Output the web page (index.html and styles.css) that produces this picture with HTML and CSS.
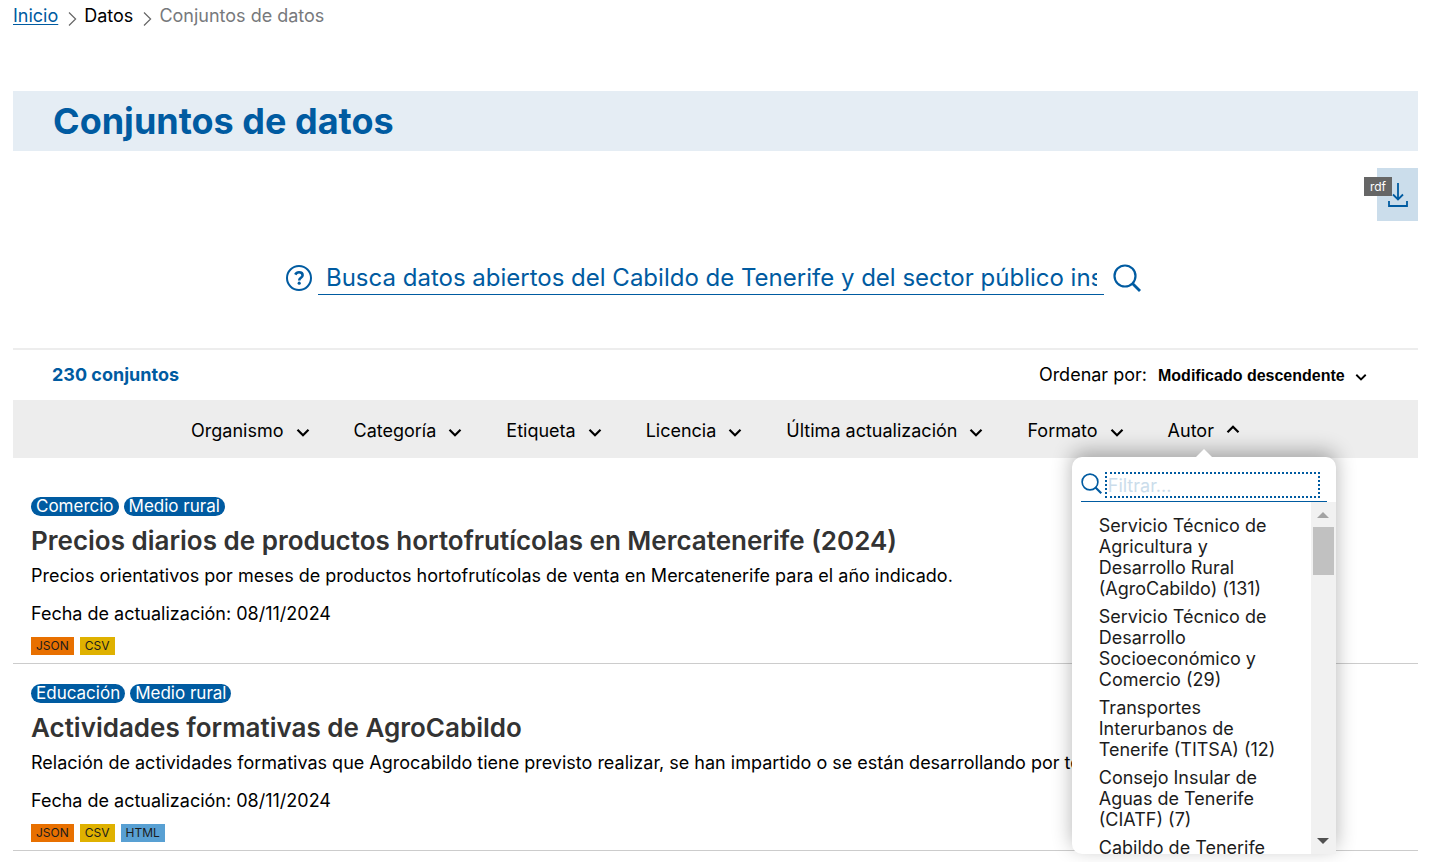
FILE: index.html
```html
<!DOCTYPE html>
<html lang="es">
<head>
<meta charset="utf-8">
<meta name="viewport" content="width=device-width, initial-scale=1">
<title>Conjuntos de datos</title>
<link rel="stylesheet" href="styles.css">
</head>
<body>
<svg class="sprite" aria-hidden="true">
  <symbol id="down" viewBox="0 0 14 10"><path d="M1.5 1.8 7 7.3l5.500-5.500" fill="none" stroke="currentColor" stroke-width="2.200"/></symbol>
  <symbol id="up" viewBox="0 0 14 10"><path d="M1.500 8.200 7 2.700l5.500 5.500" fill="none" stroke="currentColor" stroke-width="2.200"/></symbol>
  <symbol id="next" viewBox="0 0 9 16"><path d="M1 1.500 7.600 8 1 14.500" fill="none" stroke="currentColor" stroke-width="1.200"/></symbol>
  <symbol id="search" viewBox="0 0 28 28"><circle cx="12" cy="12" r="10.500" fill="none" stroke="currentColor" stroke-width="2.200"/><path d="m19 19 8 8" stroke="currentColor" stroke-width="2.800"/></symbol>
</svg>
<nav aria-label="Ruta">
  <ol class="breadcrumb">
    <li><a href="#">Inicio</a></li>
    <li><svg class="next"><use href="#next"/></svg>Datos</li>
    <li class="current"><svg class="next"><use href="#next"/></svg>Conjuntos de datos</li>
  </ol>
</nav>
<main>
  <h1 class="page-title">Conjuntos de datos</h1>
  <div class="export">
    <a class="download" href="#" aria-label="Descargar rdf">
      <span class="download-tag">rdf</span>
      <svg class="download-icon" viewBox="0 0 22 26" fill="none" stroke="currentColor" stroke-width="1.800"><path d="M11 1v16M6 12.500l5 5 5-5M2 19v5h18v-5"/></svg>
    </a>
  </div>
  <form class="search" role="search">
    <button class="icon-button" type="button" aria-label="Ayuda">
      <svg class="help-icon" viewBox="0 0 28 28"><circle cx="14" cy="14" r="12" fill="none" stroke="currentColor" stroke-width="2"/><path d="M10.300 10.600c.8-1.700 2-2.300 3.700-2.300 2.200 0 3.600 1.100 3.600 2.900 0 2.600-3.400 2.400-3.400 5.200" fill="none" stroke="currentColor" stroke-width="2.600"/><circle cx="14.200" cy="19.200" r="1.600" fill="currentColor"/></svg>
    </button>
    <input class="search-input" type="text" aria-label="Buscar datos" placeholder="Busca datos abiertos del Cabildo de Tenerife y del sector público insular">
    <button class="icon-button" type="submit" aria-label="Buscar"><svg class="search-icon"><use href="#search"/></svg></button>
  </form>
  <div class="summary">
    <h2 class="count">230 conjuntos</h2>
    <div class="order">
      <label for="order">Ordenar por:</label>
      <span class="select-wrap">
        <select id="order" class="select"><option>Modificado descendente</option></select>
        <svg class="chevron small"><use href="#down"/></svg>
      </span>
    </div>
  </div>
  <ul class="filters">
    <li><button class="filter" type="button">Organismo<svg class="chevron"><use href="#down"/></svg></button></li>
    <li><button class="filter" type="button">Categoría<svg class="chevron"><use href="#down"/></svg></button></li>
    <li><button class="filter" type="button">Etiqueta<svg class="chevron"><use href="#down"/></svg></button></li>
    <li><button class="filter" type="button">Licencia<svg class="chevron"><use href="#down"/></svg></button></li>
    <li><button class="filter" type="button">Última actualización<svg class="chevron"><use href="#down"/></svg></button></li>
    <li><button class="filter" type="button">Formato<svg class="chevron"><use href="#down"/></svg></button></li>
    <li class="open">
      <button class="filter expanded" type="button" aria-expanded="true">Autor<svg class="chevron"><use href="#up"/></svg></button>
      <div class="panel">
        <div class="panel-search">
          <svg class="panel-icon"><use href="#search"/></svg>
          <input class="panel-input" type="text" aria-label="Filtrar autores" placeholder="Filtrar...">
        </div>
        <div class="panel-body">
          <ul class="options">
            <li><a href="#">Servicio Técnico de Agricultura y Desarrollo Rural (AgroCabildo) (131)</a></li>
            <li><a href="#">Servicio Técnico de Desarrollo Socioeconómico y Comercio (29)</a></li>
            <li><a href="#">Transportes Interurbanos de Tenerife (TITSA) (12)</a></li>
            <li><a href="#">Consejo Insular de Aguas de Tenerife (CIATF) (7)</a></li>
            <li><a href="#">Cabildo de Tenerife</a></li>
          </ul>
          <div class="scrollbar" aria-hidden="true">
            <span class="arrow arrow-up"></span>
            <span class="thumb"></span>
            <span class="arrow arrow-down"></span>
          </div>
        </div>
      </div>
    </li>
  </ul>
  <article class="dataset">
    <ul class="topics"><li>Comercio</li><li>Medio rural</li></ul>
    <h3 class="dataset-title">Precios diarios de productos hortofrutícolas en Mercatenerife (2024)</h3>
    <p class="description">Precios orientativos por meses de productos hortofrutícolas de venta en Mercatenerife para el año indicado.</p>
    <p class="updated">Fecha de actualización: 08/11/2024</p>
    <ul class="formats"><li class="json">JSON</li><li class="csv">CSV</li></ul>
  </article>
  <article class="dataset">
    <ul class="topics"><li>Educación</li><li>Medio rural</li></ul>
    <h3 class="dataset-title">Actividades formativas de AgroCabildo</h3>
    <p class="description">Relación de actividades formativas que Agrocabildo tiene previsto realizar, se han impartido o se están desarrollando por temática.</p>
    <p class="updated">Fecha de actualización: 08/11/2024</p>
    <ul class="formats"><li class="json">JSON</li><li class="csv">CSV</li><li class="html">HTML</li></ul>
  </article>
</main>
</body>
</html>
```
FILE: styles.css
```css
* { box-sizing: border-box; }
body {
  min-height: 100vh;
  margin: 0;
  padding: 4px 12px 0 13px;
  background: #fff;
  color: #000;
  font-family: Inter, "Open Sans", sans-serif;
  font-size: 18px;
  line-height: 24px;
}
ul, ol { margin: 0; padding: 0; list-style: none; }
button { padding: 0; border: 0; background: none; color: inherit; font: inherit; }
.sprite { position: absolute; width: 0; height: 0; }

.breadcrumb { display: flex; gap: 10px; margin-bottom: 63px; }
.breadcrumb li { display: flex; align-items: center; gap: 7px; }
.breadcrumb a { color: #005ba1; text-underline-offset: 2px; }
.breadcrumb .current { color: #77797c; }
.next { width: 9px; height: 16px; margin-top: 6px; color: #666; }

.page-title {
  margin: 0 0 17px;
  padding: 10px 40px;
  background: #e5edf4;
  color: #005ba1;
  font-size: 36px;
  line-height: 40px;
}
.export { display: flex; justify-content: flex-end; margin-bottom: 40px; }
.download {
  position: relative;
  display: flex;
  justify-content: center;
  align-items: center;
  width: 41px;
  height: 53px;
  background: #cbddeb;
  color: #005ba1;
}
.download-tag {
  position: absolute;
  top: 9px;
  right: 26px;
  width: 28px;
  background: #666;
  color: #fff;
  font-size: 12px;
  line-height: 19px;
  text-align: center;
}
.download-icon { width: 22px; height: 26px; }

.search {
  display: flex;
  align-items: center;
  gap: 5px;
  width: calc(61% + 4px);
  margin: 0 auto 53px;
  padding-right: 5px;
  color: #005ba1;
}
.search-input {
  flex: 1;
  min-width: 0;
  height: 34px;
  margin-right: 4px;
  padding: 0 7px 0 8px;
  border: 0;
  border-bottom: 1px solid #005ba1;
  color: #005ba1;
  font-family: inherit;
  font-size: 24px;
}
.search-input::placeholder { color: #005ba1; opacity: 1; }
.icon-button { display: flex; }
.help-icon, .search-icon { width: 28px; height: 28px; }

.summary {
  display: flex;
  justify-content: space-between;
  align-items: center;
  padding: 0 51px 0 39px;
  border-top: 2px solid #ededed;
  line-height: 50px;
}
.count { margin: 0; color: #005ba1; font-size: 18px; }
.order { display: flex; align-items: center; gap: 11px; }
.select-wrap { display: flex; align-items: center; gap: 10px; }
.select {
  appearance: none;
  padding: 0;
  border: 0;
  background: none;
  color: #000;
  font: bold 16px "Liberation Sans", sans-serif;
}
.chevron { width: 14px; height: 10px; margin-top: 4px; }
.chevron.small { width: 12px; height: 9px; }

.filters { display: flex; justify-content: center; gap: 44px; background: #ededed; }
.filter { display: flex; align-items: center; gap: 12px; height: 58px; padding-top: 3px; }
.filter.expanded .chevron { margin: 0 0 4px; }
.open { position: relative; }
.panel {
  position: absolute;
  z-index: 2;
  top: 57px;
  left: 50%;
  width: 264px;
  margin-left: -132px;
  border-radius: 10px 10px 0 10px;
  background: #fff;
  box-shadow: 0 -6px 20px rgba(0, 0, 0, 0.3);
  clip-path: inset(-30px -30px -8px);
  color: #1c1c1c;
  line-height: 21px;
}
.panel::before {
  content: "";
  position: absolute;
  top: -8px;
  left: 124px;
  border: 8px solid transparent;
  border-top: 0;
  border-bottom-color: #fff;
}
.panel-search {
  display: flex;
  align-items: center;
  gap: 3px;
  margin: 0 9px;
  padding: 15px 7px 3px 0;
  border-bottom: 1px solid #005ba1;
}
.panel-icon { width: 21px; height: 21px; margin-bottom: 4px; color: #005ba1; }
.panel-input {
  flex: 1;
  min-width: 0;
  height: 26px;
  padding: 0 1px;
  border: 2px dotted #005ba1;
  outline: 0;
  font-family: inherit;
  font-size: 18px;
}
.panel-input::placeholder { color: #cbddeb; opacity: 1; }
.panel-body { display: flex; height: 352px; overflow: hidden; }
.options { flex: 1; padding: 13px 20px 0 27px; }
.options li { margin-bottom: 7px; }
.options a { color: inherit; text-decoration: none; }
.scrollbar { display: flex; flex-direction: column; align-items: center; width: 25px; background: #f1f1f1; }
.thumb { width: 21px; height: 48px; background: #c1c1c1; }
.arrow { border: 6px solid transparent; }
.arrow-up { margin: 10px 0 9px; border-top: 0; border-bottom-color: #a3a3a3; }
.arrow-down { margin: auto 0 10px; border-bottom: 0; border-top-color: #505050; }

.dataset { padding: 20px 18px 8px; border-bottom: 1px solid #ccc; }
.filters + .dataset { padding-top: 39px; }
.topics { display: flex; gap: 5px; }
.formats { display: flex; gap: 6px; }
.topics li { padding: 0 5px; border-radius: 10px; background: #005ba1; color: #fff; font-size: 17px; line-height: 19px; }
.dataset-title { margin: 9px 0 7px; color: #333; font-size: 26px; font-weight: 600; line-height: 32px; }
.description, .updated { margin: 0 0 14px; }
.updated { margin-bottom: 11px; }
.formats li { padding: 0 5px; color: #1c1c1c; font-size: 12px; line-height: 18px; }
.json { background: #e87000; }
.csv { background: #dfb100; }
.html { background: #58a0d3; }
```
